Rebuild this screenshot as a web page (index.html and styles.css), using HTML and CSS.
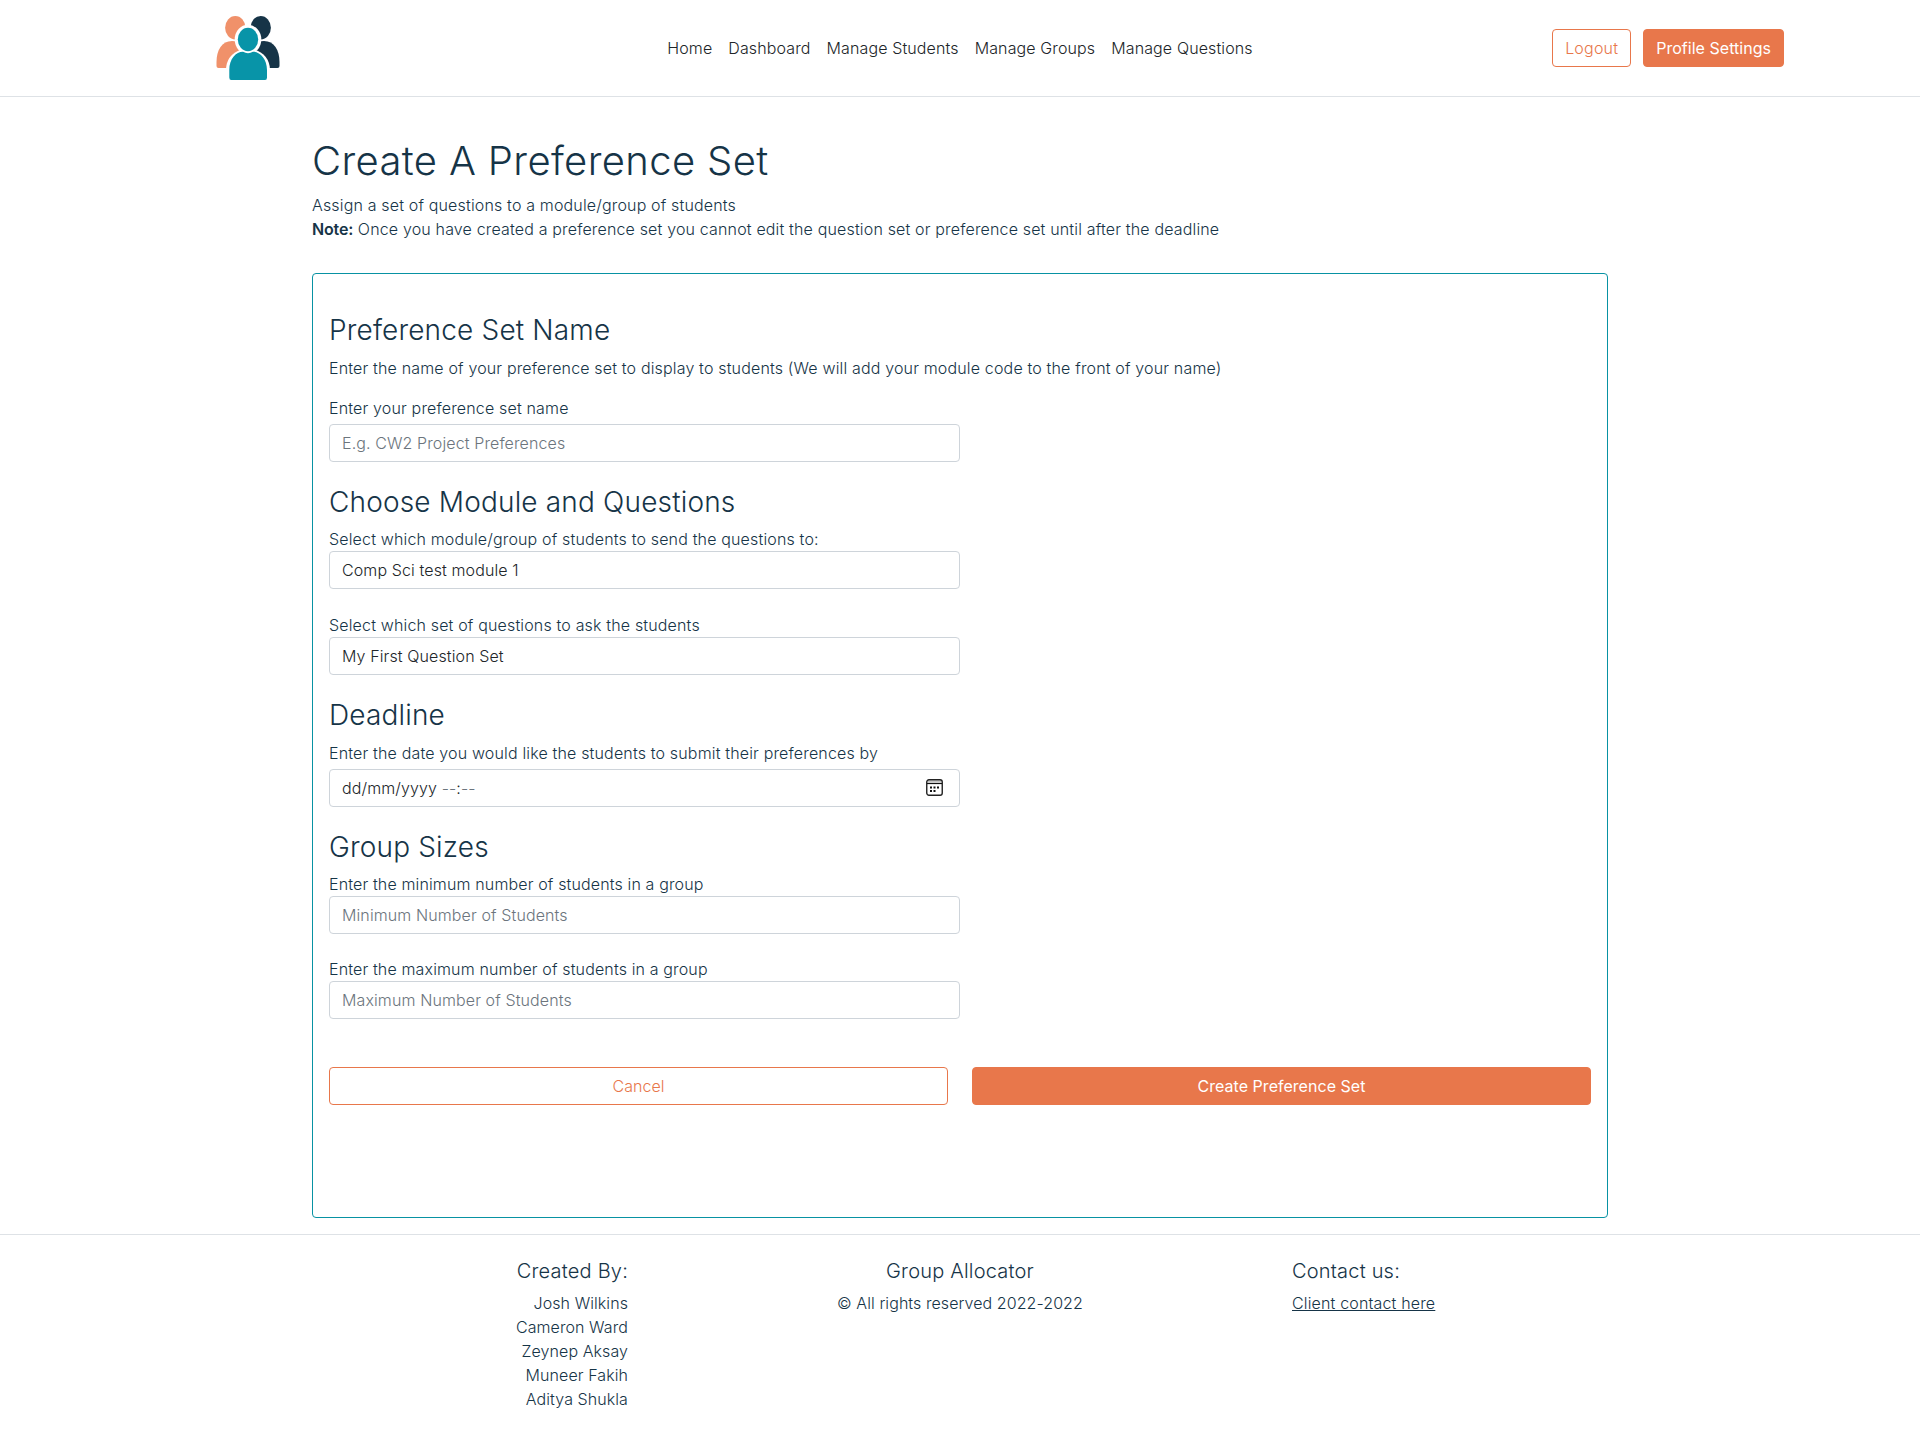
FILE: index.html
```html
<!DOCTYPE html>
<html lang="en">
<head>
<meta charset="utf-8">
<title>Create A Preference Set</title>
<link rel="stylesheet" href="styles.css">
</head>
<body>
<header class="site-header">
  <a class="brand" href="#" aria-label="Group Allocator">
    <svg width="64" height="64" viewBox="0 0 64 64">
      <path fill="#f0916a" d="M.5 50V46C.5 34 6 25 16 25C24 25 30 32 30 41V52H2.500Q.5 52 .5 50Z"/>
      <ellipse fill="#f0916a" cx="19.300" cy="11.700" rx="10.200" ry="11.700"/>
      <path fill="#163447" d="M63.500 50V46C63.500 34 58 25 48 25C40 25 34 32 34 41V52H61.500Q63.500 52 63.500 50Z"/>
      <ellipse fill="#163447" cx="44.700" cy="11.700" rx="10.200" ry="11.700"/>
      <path fill="#fff" d="M10 66V54C10 42 18.500 33 32 33S54 42 54 54V66Z"/>
      <ellipse fill="#fff" cx="32" cy="23.500" rx="13.300" ry="14.800"/>
      <path fill="#0894a8" d="M13.300 61.500V54C13.300 43 20 35.800 27 35.800Q32 38.500 37 35.800C44 35.800 51 43 51 54V61.500Q51 64 49 64H15.300Q13.300 64 13.300 61.500Z"/>
      <ellipse fill="#0894a8" cx="32" cy="23.500" rx="10.200" ry="11.700"/>
    </svg>
  </a>
  <nav class="main-nav">
    <a href="#">Home</a>
    <a href="#">Dashboard</a>
    <a href="#">Manage Students</a>
    <a href="#">Manage Groups</a>
    <a href="#">Manage Questions</a>
  </nav>
  <div class="account">
    <button class="btn btn-outline">Logout</button>
    <button class="btn btn-solid">Profile Settings</button>
  </div>
</header>

<main class="container">
  <h1>Create A Preference Set</h1>
  <p class="intro">Assign a set of questions to a module/group of students<br><b>Note:</b> Once you have created a preference set you cannot edit the question set or preference set until after the deadline</p>

  <form class="card">
    <section class="section section-name">
      <h3>Preference Set Name</h3>
      <p class="hint">Enter the name of your preference set to display to students (We will add your module code to the front of your name)</p>
      <label class="spaced" for="name">Enter your preference set name</label>
      <input class="control" id="name" type="text" placeholder="E.g. CW2 Project Preferences">
    </section>
    <section class="section">
      <h3>Choose Module and Questions</h3>
      <label for="module">Select which module/group of students to send the questions to:</label>
      <select class="control" id="module"><option>Comp Sci test module 1</option></select>
      <label class="next" for="questions">Select which set of questions to ask the students</label>
      <select class="control" id="questions"><option>My First Question Set</option></select>
    </section>
    <section class="section">
      <h3>Deadline</h3>
      <label class="spaced">Enter the date you would like the students to submit their preferences by</label>
      <div class="control date">
        <span>dd/mm/yyyy <i>--</i>:<i>--</i></span>
        <svg width="17" height="17" viewBox="0 0 17 17">
          <rect x="2" y="1.500" width="13" height="2" fill="#c4c4c4"/>
          <rect x=".75" y=".75" width="15.500" height="15.500" rx="2.200" fill="none" stroke="#222" stroke-width="1.400"/>
          <path d="M1 4.500H16" stroke="#111" stroke-width="1.200"/>
          <path d="M4 7.500h2v2H4zM7.500 7.500h2v2h-2zM11 7.500h2v2h-2zM4 11h2v2H4zM7.500 11h2v2h-2z" fill="#111"/>
        </svg>
      </div>
    </section>
    <section class="section section-sizes">
      <h3>Group Sizes</h3>
      <label for="min">Enter the minimum number of students in a group</label>
      <input class="control" id="min" type="text" placeholder="Minimum Number of Students">
      <label class="next" for="max">Enter the maximum number of students in a group</label>
      <input class="control" id="max" type="text" placeholder="Maximum Number of Students">
    </section>
    <div class="actions">
      <button class="btn btn-outline cancel" type="button">Cancel</button>
      <button class="btn btn-solid" type="button">Create Preference Set</button>
    </div>
  </form>
</main>

<footer class="site-footer">
  <div class="authors">
    <h5>Created By:</h5>
    <ul>
      <li>Josh Wilkins</li>
      <li>Cameron Ward</li>
      <li>Zeynep Aksay</li>
      <li>Muneer Fakih</li>
      <li>Aditya Shukla</li>
    </ul>
  </div>
  <div class="rights">
    <h5>Group Allocator</h5>
    <p>© All rights reserved 2022-2022</p>
  </div>
  <div class="contact">
    <h5>Contact us:</h5>
    <a href="#">Client contact here</a>
  </div>
</footer>
</body>
</html>
```
FILE: styles.css
```css
*, *::before, *::after { box-sizing: border-box; }

body {
  margin: 0;
  font: 300 16px/24px Inter, "Liberation Sans", sans-serif;
  letter-spacing: 0.16px;
  color: #163447;
  background: #fff;
}

h1, h3, h5, p, ul { margin: 0; font-weight: 300; }
h1 { font-size: 40px; line-height: 48px; margin-bottom: 8px; letter-spacing: 0.36px; }
h3 { font-size: 28px; line-height: 33.6px; margin-bottom: 8px; letter-spacing: 0.17px; }
h5 { font-size: 20px; line-height: 24px; margin-bottom: 8px; letter-spacing: 0.2px; }
b { font-weight: 600; letter-spacing: -0.15px; }
ul { padding: 0; list-style: none; }

.site-header {
  display: grid;
  grid-template-columns: 1fr auto 1fr;
  align-items: center;
  height: 97px;
  padding: 0 136px;
  border-bottom: 1px solid #dee2e6;
}
.brand { display: block; height: 64px; margin-left: 80px; }
.main-nav { display: flex; gap: 16px; letter-spacing: 0.12px; }
.main-nav a { color: #212529; text-decoration: none; }
.account { display: flex; justify-content: flex-end; gap: 12px; }

.btn {
  height: 38px;
  padding: 0 12px;
  border: 1px solid #e8774b;
  border-radius: 4px;
  font: inherit;
  letter-spacing: 0.2px;
  white-space: nowrap;
}
.btn-outline { color: #e8774b; background: #fff; }
.btn-solid { color: #fff; background: #e8774b; font-weight: 400; letter-spacing: 0.03px; }
.cancel { letter-spacing: 0; }

.container { width: 1296px; margin: 0 auto; padding-top: 40px; }

.card {
  height: 945px;
  margin-top: 32px;
  padding: 40px 16px 0;
  border: 1px solid #0892a3;
  border-radius: 4px;
}
.section { margin-bottom: 24px; }
.section label { display: block; }
.section .spaced { margin-bottom: 4px; }
.section .next { margin-top: 24px; }
.section-sizes .next { margin-top: 23px; }
.section-sizes label { letter-spacing: 0.14px; }
.section-sizes { margin-bottom: 48px; }
.hint { margin-bottom: 16px; }

.control {
  display: block;
  width: 631px;
  height: 38px;
  padding: 0 12px;
  border: 1px solid #ced4da;
  border-radius: 4px;
  appearance: none;
  font: inherit;
  letter-spacing: 0.11px;
  color: #212529;
  background: #fff;
}
.control::placeholder { color: #6c757d; opacity: 1; }
.date { display: flex; align-items: center; justify-content: space-between; padding-right: 16px; }
.date i { font-style: normal; color: #6c757d; }

.actions { display: grid; grid-template-columns: 1fr 1fr; gap: 24px; }

.site-footer {
  display: grid;
  grid-template-columns: repeat(3, 1fr);
  height: 201px;
  margin-top: 16px;
  padding-top: 24px;
  border-top: 1px solid #dee2e6;
}
.site-footer > div { padding: 0 12px; }
.authors { text-align: right; letter-spacing: 0.08px; }
.rights { text-align: center; letter-spacing: 0.07px; }
.contact a { color: inherit; }
```
